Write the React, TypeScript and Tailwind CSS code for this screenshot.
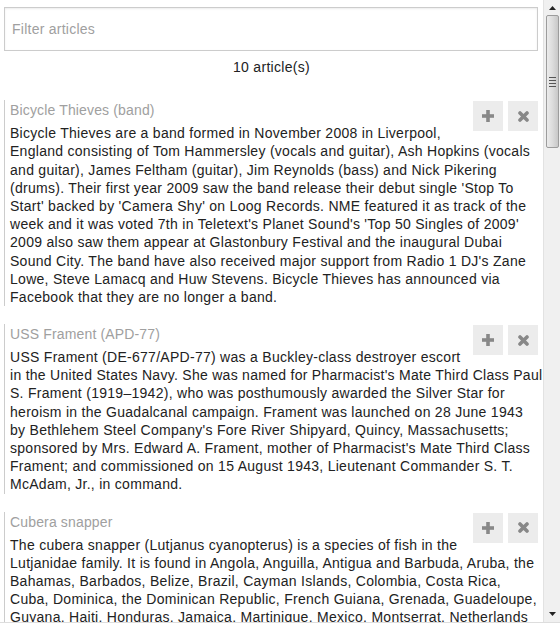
import React from "react";

const articles = [
  {
    title: "Bicycle Thieves (band)",
    body: "Bicycle Thieves are a band formed in November 2008 in Liverpool, England consisting of Tom Hammersley (vocals and guitar), Ash Hopkins (vocals and guitar), James Feltham (guitar), Jim Reynolds (bass) and Nick Pikering (drums). Their first year 2009 saw the band release their debut single 'Stop To Start' backed by 'Camera Shy' on Loog Records. NME featured it as track of the week and it was voted 7th in Teletext's Planet Sound's 'Top 50 Singles of 2009' 2009 also saw them appear at Glastonbury Festival and the inaugural Dubai Sound City. The band have also received major support from Radio 1 DJ's Zane Lowe, Steve Lamacq and Huw Stevens. Bicycle Thieves has announced via Facebook that they are no longer a band.",
  },
  {
    title: "USS Frament (APD-77)",
    body: "USS Frament (DE-677/APD-77) was a Buckley-class destroyer escort in the United States Navy. She was named for Pharmacist's Mate Third Class Paul S. Frament (1919\u20131942), who was posthumously awarded the Silver Star for heroism in the Guadalcanal campaign. Frament was launched on 28 June 1943\nby Bethlehem Steel Company's Fore River Shipyard, Quincy, Massachusetts; sponsored by Mrs. Edward A. Frament, mother of Pharmacist's Mate Third Class Frament; and commissioned on 15 August 1943, Lieutenant Commander S. T. McAdam, Jr., in command.",
  },
  {
    title: "Cubera snapper",
    body: "The cubera snapper (Lutjanus cyanopterus) is a species of fish in the Lutjanidae family. It is found in Angola, Anguilla, Antigua and Barbuda, Aruba, the Bahamas, Barbados, Belize, Brazil, Cayman Islands, Colombia, Costa Rica,\nCuba, Dominica, the Dominican Republic, French Guiana, Grenada, Guadeloupe, Guyana, Haiti, Honduras, Jamaica, Martinique, Mexico, Montserrat, Netherlands Antilles, Nicaragua, Panama, Puerto Rico, Saint Kitts and Nevis, Saint Lucia, Saint Vincent and the Grenadines, Suriname, Trinidad and Tobago, Turks and Caicos Islands, the United States, Venezuela, and the Virgin Islands.",
  },
];

function PlusIcon() {
  return (
    <svg width="12" height="12" viewBox="0 0 12 12">
      <rect x="4.2" y="0" width="3.6" height="12" fill="#888" />
      <rect x="0" y="4.2" width="12" height="3.6" fill="#888" />
    </svg>
  );
}

function XIcon() {
  return (
    <svg width="11" height="11" viewBox="0 0 11 11">
      <path d="M2 2 L9 9 M9 2 L2 9" stroke="#888" strokeWidth="3.6" strokeLinecap="round" />
    </svg>
  );
}

function Article({ title, body }: { title: string; body: string }) {
  return (
    <div className="ml-[4px] border-l border-[#cccccc] pl-[5px] mb-[18px]">
      <div className="float-right flex gap-[5px] mr-[5px] mt-[1px] ml-[6px]">
        <button className="w-[30px] h-[30px] bg-[#ececec] flex items-center justify-center">
          <PlusIcon />
        </button>
        <button className="w-[30px] h-[30px] bg-[#ececec] flex items-center justify-center">
          <XIcon />
        </button>
      </div>
      <div className="text-[14px] leading-[20px] tracking-[0.15px] text-[#a0a0a0] mb-[4px]">{title}</div>
      <div className="text-[14px] leading-[1.3] tracking-[0.28px] text-[#222] mr-[-3px] whitespace-pre-line">{body}</div>
    </div>
  );
}

function Scrollbar() {
  return (
    <div className="w-[17px] h-full bg-[#f0f0f0] border-l border-[#e2e2e2] flex flex-col items-center shrink-0">
      <div className="h-[15px] w-full flex items-center justify-center">
        <svg width="7" height="4" viewBox="0 0 7 4">
          <path d="M0 4 L3.5 0 L7 4 Z" fill="#222" />
        </svg>
      </div>
      <div className="w-[13px] h-[133px] rounded-[2px] border border-[#9c9c9c] bg-gradient-to-r from-[#ececec] via-[#dcdcdc] to-[#c8c8c8] flex flex-col items-center justify-center gap-[2px]">
        <div className="w-[7px] h-[1px] bg-[#555]" />
        <div className="w-[7px] h-[1px] bg-[#555]" />
        <div className="w-[7px] h-[1px] bg-[#555]" />
        <div className="w-[7px] h-[1px] bg-[#555]" />
      </div>
      <div className="flex-1" />
      <div className="h-[15px] w-full flex items-center justify-center mb-[1px]">
        <svg width="7" height="4" viewBox="0 0 7 4">
          <path d="M0 0 L7 0 L3.5 4 Z" fill="#222" />
        </svg>
      </div>
    </div>
  );
}

export default function App() {
  return (
    <div
      className="w-[560px] h-[623px] flex overflow-hidden bg-white border-b border-[#dddddd]"
      style={{ fontFamily: "'Liberation Sans', Arial, sans-serif" }}
    >
      <div className="flex-1 h-full overflow-hidden">
        <div className="pt-[7px]">
          <input
            placeholder="Filter articles"
            className="block ml-[4px] mr-[5px] w-[534px] h-[44px] border border-[#cccccc] pl-[7px] text-[14px] tracking-[0.25px] text-[#333] placeholder:text-[#a0a0a0] shadow-[inset_0_1px_2px_rgba(0,0,0,0.08)] outline-none"
          />
          <div className="mt-[7px] mb-[24px] text-center text-[14px] leading-[1.3] tracking-[0.3px] text-[#222]">10 article(s)</div>
          {articles.map((a) => (
            <Article key={a.title} title={a.title} body={a.body} />
          ))}
        </div>
      </div>
      <Scrollbar />
    </div>
  );
}
